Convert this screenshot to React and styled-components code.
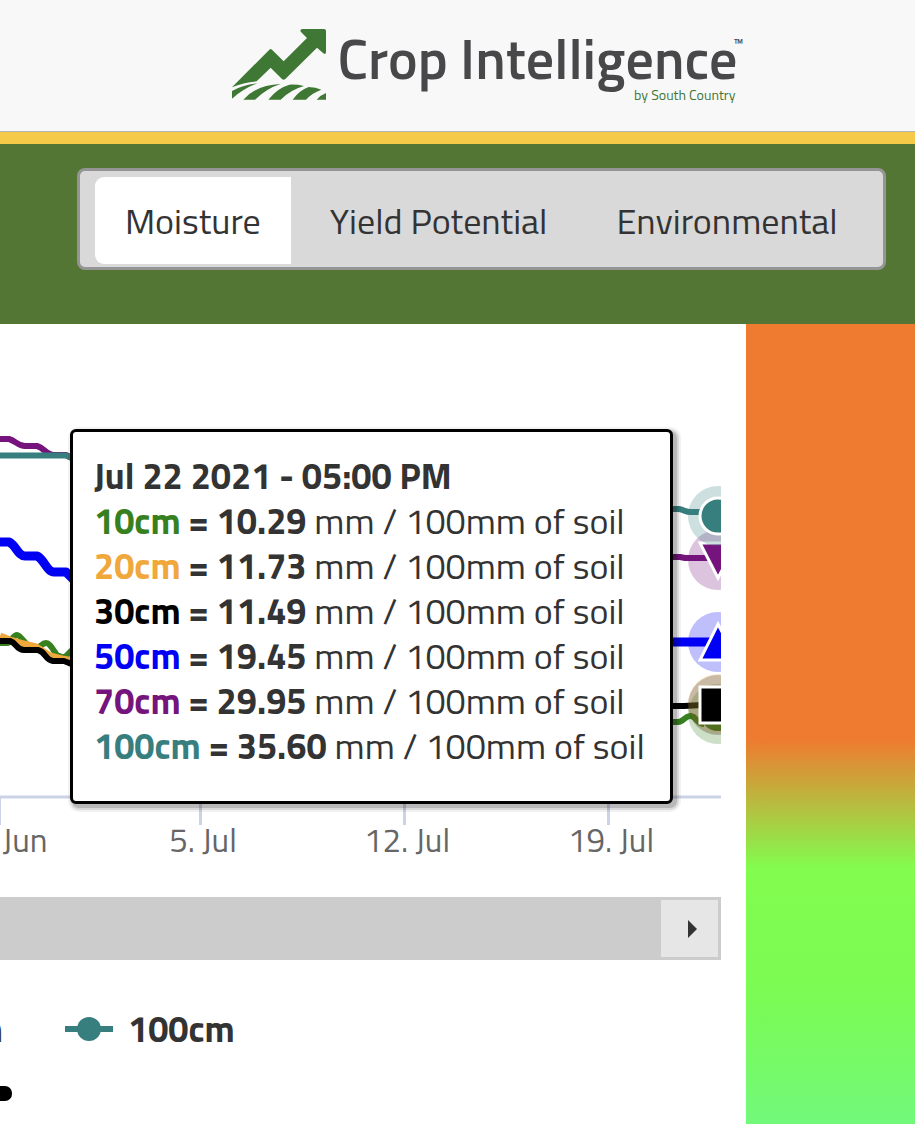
import { useState } from 'react';
import styled, { createGlobalStyle } from 'styled-components';

const GlobalStyle = createGlobalStyle`
  *, *::before, *::after {
    box-sizing: border-box;
  }

  body {
    margin: 0;
    background: #ffffff;
    color: #333333;
    font-family: 'Titillium Web', Roboto, 'Open Sans', sans-serif;
    overflow-x: hidden;
  }

  button {
    font: inherit;
    color: inherit;
    border: 0;
    cursor: pointer;
  }
`;

const Page = styled.div`
  display: flex;
  flex-direction: column;
  min-height: 100vh;
`;

const Header = styled.header`
  display: flex;
  justify-content: center;
  padding: 29px 0 26px 54px;
  background: #f8f8f8;
  border-bottom: 1px solid #b4b4b4;
`;

const Brand = styled.a`
  display: flex;
  align-items: flex-start;
  gap: 12px;
  height: 76px;
  color: #48484a;
  text-decoration: none;
`;

const BrandText = styled.span`
  position: relative;
  display: flex;
  flex-direction: column;
  align-items: flex-end;
`;

const BrandName = styled.span`
  font-size: 56px;
  font-weight: 600;
  line-height: 60px;
  white-space: nowrap;
`;

const BrandOwner = styled.span`
  padding-right: 2px;
  color: #3f7735;
  font-size: 14px;
  line-height: 12px;
`;

const Trademark = styled.span`
  position: absolute;
  top: 6px;
  right: -6px;
  font-size: 16px;
  line-height: 16px;
`;

const Toolbar = styled.nav`
  padding: 24px 29px 54px 77px;
  background: #547634;
  border-top: 12px solid #f4ca48;
`;

const TabGroup = styled.div`
  display: flex;
  gap: 9px;
  padding: 6px 15px 3px;
  background: #d9d9d9;
  border: 3px solid #959595;
  border-radius: 8px;
`;

const Tab = styled.button`
  height: 87px;
  padding: 0 30px;
  background: ${props => props.$active ? '#ffffff' : 'transparent'};
  border-radius: 9px 0 0 9px;
  font-size: 36px;
  font-weight: 400;
  white-space: nowrap;
`;

const Content = styled.main`
  display: flex;
  flex: 1;
`;

const ChartPanel = styled.section`
  position: relative;
  flex: 1;
  min-width: 0;
  padding: 0 25px 23px 0;
`;

const FieldStrip = styled.aside`
  flex: 0 0 169px;
  background: linear-gradient(
    #ee7b30 0%,
    #ee7b30 52%,
    #82fc4e 68%,
    #7bfb54 84%,
    #72f97a 100%
  );
`;

const Plot = styled.svg`
  display: block;
  width: 100%;
  height: auto;
`;

const AxisLabel = styled.text`
  fill: #666666;
  font-size: 33px;
  font-weight: 400;
`;

const Tooltip = styled.div`
  position: absolute;
  top: 105px;
  left: 70px;
  padding: 21px 25px 33px 21px;
  background: #ffffff;
  border: 3px solid #000000;
  border-radius: 6px;
  box-shadow:
    3px 3px 0 1px rgba(0, 0, 0, 0.15),
    3px 3px 0 3px rgba(0, 0, 0, 0.1),
    3px 3px 0 5px rgba(0, 0, 0, 0.05);
  font-size: 36px;
  font-weight: 400;
  line-height: 45px;
  white-space: nowrap;
`;

const TooltipLine = styled.div`
  b {
    font-weight: 700;
  }
`;

const Depth = styled.b`
  color: ${props => props.$color};
`;

const ScrollTrack = styled.div`
  display: flex;
  justify-content: flex-end;
  margin-top: 33px;
  padding: 3px;
  background: #cccccc;
`;

const ScrollButton = styled.button`
  display: flex;
  align-items: center;
  justify-content: center;
  width: 57px;
  height: 57px;
  padding: 0 0 0 6px;
  background: #e6e6e6;
`;

const Legend = styled.div`
  display: flex;
  gap: 62px;
  margin-top: 46px;
`;

const LegendItem = styled.button`
  display: flex;
  align-items: center;
  justify-content: flex-end;
  gap: 15px;
  width: ${props => props.$cut ? '3px' : 'auto'};
  padding: 0;
  overflow: ${props => props.$cut ? 'hidden' : 'visible'};
  background: none;
  font-size: 36px;
  font-weight: 700;
  line-height: 45px;
`;

const RangeEnd = styled.div`
  width: 12px;
  height: 15px;
  margin-top: 35px;
  background: #000000;
  border-radius: 0 7px 7px 0;
`;

const tabs = ['Moisture', 'Yield Potential', 'Environmental'];

const readings = [
  { depth: '10cm', value: '10.29', color: '#37801f' },
  { depth: '20cm', value: '11.73', color: '#f0a73b' },
  { depth: '30cm', value: '11.49', color: '#000000' },
  { depth: '50cm', value: '19.45', color: '#0000f5' },
  { depth: '70cm', value: '29.95', color: '#75147c' },
  { depth: '100cm', value: '35.60', color: '#377e7f' },
];

const ticks = [
  { x: -1, label: 'Jun', labelX: 25 },
  { x: 200, label: '5. Jul', labelX: 203 },
  { x: 404, label: '12. Jul', labelX: 407 },
  { x: 608, label: '19. Jul', labelX: 611 },
];

const BrandMark = () => (
  <svg width="94" height="71" viewBox="36 42 282 213" fill="#3f7735" aria-hidden="true">
    <path d="M36 217 148 104Q152 100 156 104L191 139 261 69 243 51Q238 43 247 42H312Q318 42 318 48V111Q317 120 310 115L291 98 196 192Q191 197 186 192L152 158 110 199Q70 202 36 217Z" />
    <path d="M36 228Q68 209 112 205 70 221 36 251Z" />
    <path d="M70 254Q108 210 182 207 140 220 105 254Z" />
    <path d="M145 254Q172 219 208 209 232 208 252 213 212 224 182 254Z" />
    <path d="M218 254Q238 226 266 216 288 217 304 224 276 234 258 254Z" />
    <path d="M290 254Q302 240 318 234V254Z" />
  </svg>
);

const MoistureChart = () => (
  <Plot viewBox="0 324 721 540" role="img" aria-label="Soil moisture by depth">
    <g stroke="#ccd3e6" strokeWidth="3">
      <path d="M0 797H721" />
      {ticks.map(tick => (
        <path key={tick.x} d={`M${tick.x + 0.5} 797V825`} />
      ))}
    </g>
    {ticks.map(tick => (
      <AxisLabel key={tick.label} x={tick.labelX} y="852" textAnchor="middle">
        {tick.label}
      </AxisLabel>
    ))}

    <g fill="none" strokeWidth="6" strokeLinejoin="round">
      <path stroke="#37801f" d="M0 643H8C13 638 14 635 17 635S24 642 29 647L36 649C41 647 42 643 46 643S53 650 57 655L64 658 74 648" />
      <path stroke="#f0a73b" strokeWidth="7" d="M0 636 10 640 24 644 36 647 50 656 62 659 74 661" />
      <path stroke="#000000" d="M0 641H10C17 643 16 650 24 650H38C46 652 45 660 53 661H64L74 665" />
      <path stroke="#75147c" d="M0 439H9C16 441 18 446 25 446H37C44 448 47 455 54 455H66L74 459" />
      <path stroke="#377e7f" d="M0 455.5H66L74 459" />
      <path stroke="#0000f5" strokeWidth="9" d="M0 542H9C16 545 18 556 25 556H37C44 559 47 572 54 572H66L74 580" />

      <path stroke="#377e7f" d="M670 509H679C685 510 685 512 691 512H700" />
      <path stroke="#75147c" d="M670 557H680L685 558H708" />
      <path stroke="#0000f5" strokeWidth="9" d="M670 642H712" />
      <path stroke="#37801f" d="M670 722H678C684 722 685 715 691 716S697 724 704 724" />
      <path stroke="#000000" d="M670 706H684L702 705" />
    </g>

    <circle cx="718" cy="714" r="30" fill="#37801f" fillOpacity="0.25" />
    <circle cx="718" cy="713" r="18" fill="#37801f" />
    <circle cx="718" cy="704" r="30" fill="#f0a73b" fillOpacity="0.25" />
    <circle cx="718" cy="705" r="30" fill="#000000" fillOpacity="0.2" />
    <rect x="700" y="687" width="36" height="36" fill="#000000" stroke="#ffffff" strokeWidth="3" />
    <circle cx="718" cy="642" r="30" fill="#0000f5" fillOpacity="0.25" />
    <path d="M718 624 736 660H700Z" fill="#0000f5" stroke="#ffffff" strokeWidth="3" />
    <circle cx="718" cy="560" r="30" fill="#75147c" fillOpacity="0.25" />
    <path d="M700 543H736L718 578Z" fill="#75147c" stroke="#ffffff" strokeWidth="3" />
    <circle cx="718" cy="516" r="30" fill="#377e7f" fillOpacity="0.25" />
    <circle cx="718" cy="516" r="18" fill="#377e7f" stroke="#ffffff" strokeWidth="3" />
  </Plot>
);

const App = () => {
  const [activeTab, setActiveTab] = useState('Moisture');

  return (
    <Page>
      <GlobalStyle />
      <Header>
        <Brand href="#">
          <BrandMark />
          <BrandText>
            <BrandName>Crop Intelligence</BrandName>
            <BrandOwner>by South Country</BrandOwner>
            <Trademark>™</Trademark>
          </BrandText>
        </Brand>
      </Header>

      <Toolbar>
        <TabGroup role="tablist">
          {tabs.map(tab => (
            <Tab
              key={tab}
              type="button"
              role="tab"
              aria-selected={tab === activeTab}
              $active={tab === activeTab}
              onClick={() => setActiveTab(tab)}
            >
              {tab}
            </Tab>
          ))}
        </TabGroup>
      </Toolbar>

      <Content>
        <ChartPanel>
          <MoistureChart />
          <ScrollTrack>
            <ScrollButton type="button" aria-label="Scroll right">
              <svg width="9" height="18" viewBox="0 0 9 18" aria-hidden="true">
                <path d="M0 0 9 9 0 18Z" fill="#333333" />
              </svg>
            </ScrollButton>
          </ScrollTrack>

          <Legend>
            <LegendItem type="button" $cut>70cm</LegendItem>
            <LegendItem type="button">
              <svg width="48" height="24" viewBox="0 0 48 24" fill="#377e7f" aria-hidden="true">
                <rect y="9" width="48" height="6" />
                <circle cx="24" cy="12" r="12" />
              </svg>
              100cm
            </LegendItem>
          </Legend>
          <RangeEnd />

          <Tooltip role="tooltip">
            <TooltipLine><b>Jul 22 2021 - 05:00 PM</b></TooltipLine>
            {readings.map(({ depth, value, color }) => (
              <TooltipLine key={depth}>
                <Depth $color={color}>{depth}</Depth>
                <b> = {value}</b> mm / 100mm of soil
              </TooltipLine>
            ))}
          </Tooltip>
        </ChartPanel>
        <FieldStrip />
      </Content>
    </Page>
  );
};

export default App;
